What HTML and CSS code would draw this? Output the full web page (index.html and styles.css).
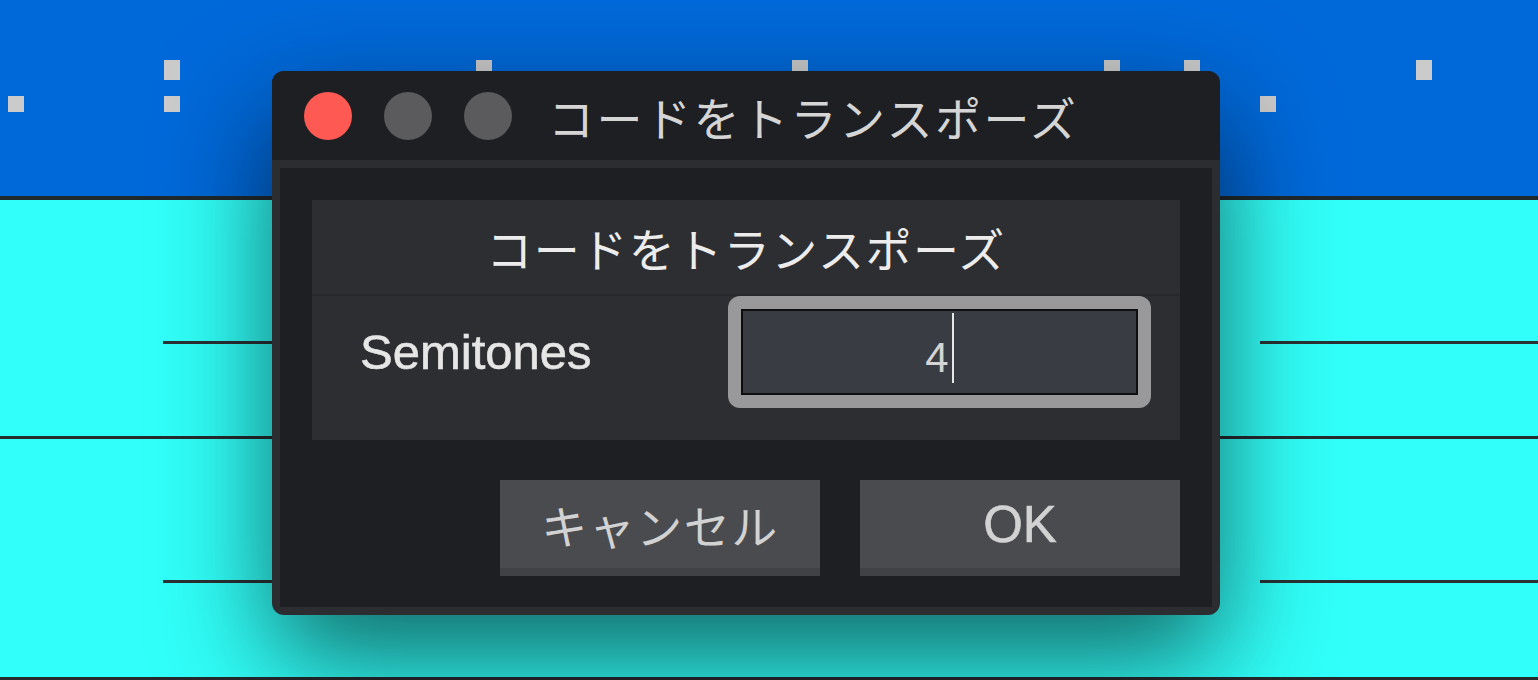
FILE: index.html
```html
<!DOCTYPE html>
<html lang="ja">
<head>
<meta charset="utf-8">
<title>コードをトランスポーズ</title>
<link rel="stylesheet" href="styles.css">
</head>
<body>
<div class="stage">
  <div class="lane-blue">
    <span class="pin tall" style="left:164px"></span>
    <span class="pin tall" style="left:476px"></span>
    <span class="pin tall" style="left:792px"></span>
    <span class="pin tall" style="left:1104px"></span>
    <span class="pin tall" style="left:1184px"></span>
    <span class="pin tall" style="left:1416px"></span>
    <span class="pin low" style="left:8px"></span>
    <span class="pin low" style="left:164px"></span>
    <span class="pin low" style="left:1260px"></span>
  </div>
  <div class="rule"></div>
  <div class="lane-cyan">
    <div class="gap g1"></div>
    <div class="split"><span class="seg left"></span><span class="seg right"></span></div>
    <div class="gap g2"></div>
    <div class="rule thin"></div>
    <div class="gap g1"></div>
    <div class="split"><span class="seg left"></span><span class="seg right"></span></div>
    <div class="gap g3"></div>
  </div>
  <div class="rule thin"></div>
</div>

<div class="dialog">
  <div class="titlebar">
    <span class="light red"></span>
    <span class="light gray"></span>
    <span class="light gray"></span>
    <span class="title">コードをトランスポーズ</span>
  </div>
  <div class="frame">
    <div class="content">
      <div class="panel">
        <div class="panel-head">コードをトランスポーズ</div>
        <div class="panel-row">
          <span class="label">Semitones</span>
          <div class="field-ring">
            <div class="field">
              <span class="value">4</span><span class="caret"></span>
            </div>
          </div>
        </div>
      </div>
      <div class="actions">
        <button class="btn jp">キャンセル</button>
        <button class="btn">OK</button>
      </div>
    </div>
  </div>
</div>
</body>
</html>
```

FILE: styles.css
```css
html, body {
  margin: 0;
  padding: 0;
}
body {
  width: 1538px;
  height: 680px;
  overflow: hidden;
  position: relative;
  background: #31fff9;
  font-family: "Liberation Sans", "Noto Sans CJK JP", sans-serif;
}
.stage {
  display: flex;
  flex-direction: column;
  height: 680px;
}
.lane-blue {
  position: relative;
  height: 196px;
  background: #0069d9;
}
.pin {
  position: absolute;
  width: 16px;
  background: #cbcbcb;
}
.pin.tall {
  top: 60px;
  height: 20px;
}
.pin.low {
  top: 96px;
  height: 16px;
}
.rule {
  height: 4px;
  background: #1f2a2e;
}
.rule.thin {
  height: 3px;
  background: #262b2e;
}
.lane-cyan {
  display: flex;
  flex-direction: column;
  background: #31fff9;
}
.gap.g1 { height: 141px; }
.gap.g2 { height: 92px; }
.gap.g3 { height: 94px; }
.split {
  display: flex;
  height: 3px;
}
.seg {
  display: block;
  height: 3px;
  background: #2b3234;
}
.seg.left {
  margin-left: 163px;
  width: 500px;
}
.seg.right {
  margin-left: auto;
  width: 278px;
}

/* dialog */
.dialog {
  position: absolute;
  left: 272px;
  top: 71px;
  width: 948px;
  height: 544px;
  border-radius: 12px;
  overflow: hidden;
  background: #2c2d30;
  box-shadow: 0 45px 110px rgba(0, 0, 0, 0.6);
  display: flex;
  flex-direction: column;
}
.titlebar {
  height: 89px;
  background: #1e1f22;
  display: flex;
  align-items: center;
  padding-left: 32px;
  gap: 32px;
}
.light {
  width: 48px;
  height: 48px;
  border-radius: 50%;
  flex: none;
}
.light.red { background: #fe5a53; }
.light.gray { background: #5b5b5d; }
.title {
  margin-left: 4px;
  font-family: "Noto Sans CJK JP", sans-serif;
  font-size: 46px;
  letter-spacing: 2.5px;
  line-height: 1;
  color: #d5d5d5;
}
.frame {
  padding: 8px;
  flex: 1;
  display: flex;
}
.content {
  flex: 1;
  background: #1e1f22;
  padding: 32px 32px 31px;
  display: flex;
  flex-direction: column;
}
.panel {
  background: #2d2e32;
  display: flex;
  flex-direction: column;
}
.panel-head {
  height: 94px;
  border-bottom: 2px solid #27282b;
  display: flex;
  align-items: center;
  justify-content: center;
  font-family: "Noto Sans CJK JP", sans-serif;
  font-size: 46px;
  letter-spacing: 1.5px;
  color: #ececec;
}
.panel-row {
  display: flex;
  align-items: center;
  height: 112px;
  padding: 0 29px 32px 48px;
}
.label {
  font-size: 49px;
  line-height: 1;
  color: #e6e6e6;
  -webkit-text-stroke: 0.6px #e6e6e6;
}
.field-ring {
  margin-left: auto;
  width: 423px;
  height: 112px;
  box-sizing: border-box;
  padding: 13px;
  border-radius: 12px;
  background: #99989a;
}
.field {
  height: 100%;
  box-sizing: border-box;
  border: 2px solid #0e0e0f;
  background: #393c43;
  display: flex;
  justify-content: center;
  align-items: flex-start;
}
.value {
  margin-top: 26px;
  font-size: 42px;
  line-height: 42px;
  color: #d4d4d4;
}
.caret {
  margin-top: 2px;
  margin-left: 3px;
  width: 2px;
  height: 70px;
  background: #e6e6e6;
}
.actions {
  margin-top: 40px;
  display: flex;
  justify-content: flex-end;
  gap: 40px;
}
.btn {
  width: 320px;
  height: 96px;
  border: 0;
  margin: 0;
  padding: 0 0 8px;
  background: #4a4b4f;
  box-shadow: inset 0 -8px 0 #414246;
  color: #d2d2d2;
  font-family: "Liberation Sans", sans-serif;
  font-size: 51px;
  line-height: 1;
  -webkit-text-stroke: 0.6px #d2d2d2;
  display: flex;
  align-items: center;
  justify-content: center;
}
.btn.jp {
  font-family: "Noto Sans CJK JP", sans-serif;
  font-size: 46px;
  letter-spacing: 1.5px;
  -webkit-text-stroke: 0;
}
```
